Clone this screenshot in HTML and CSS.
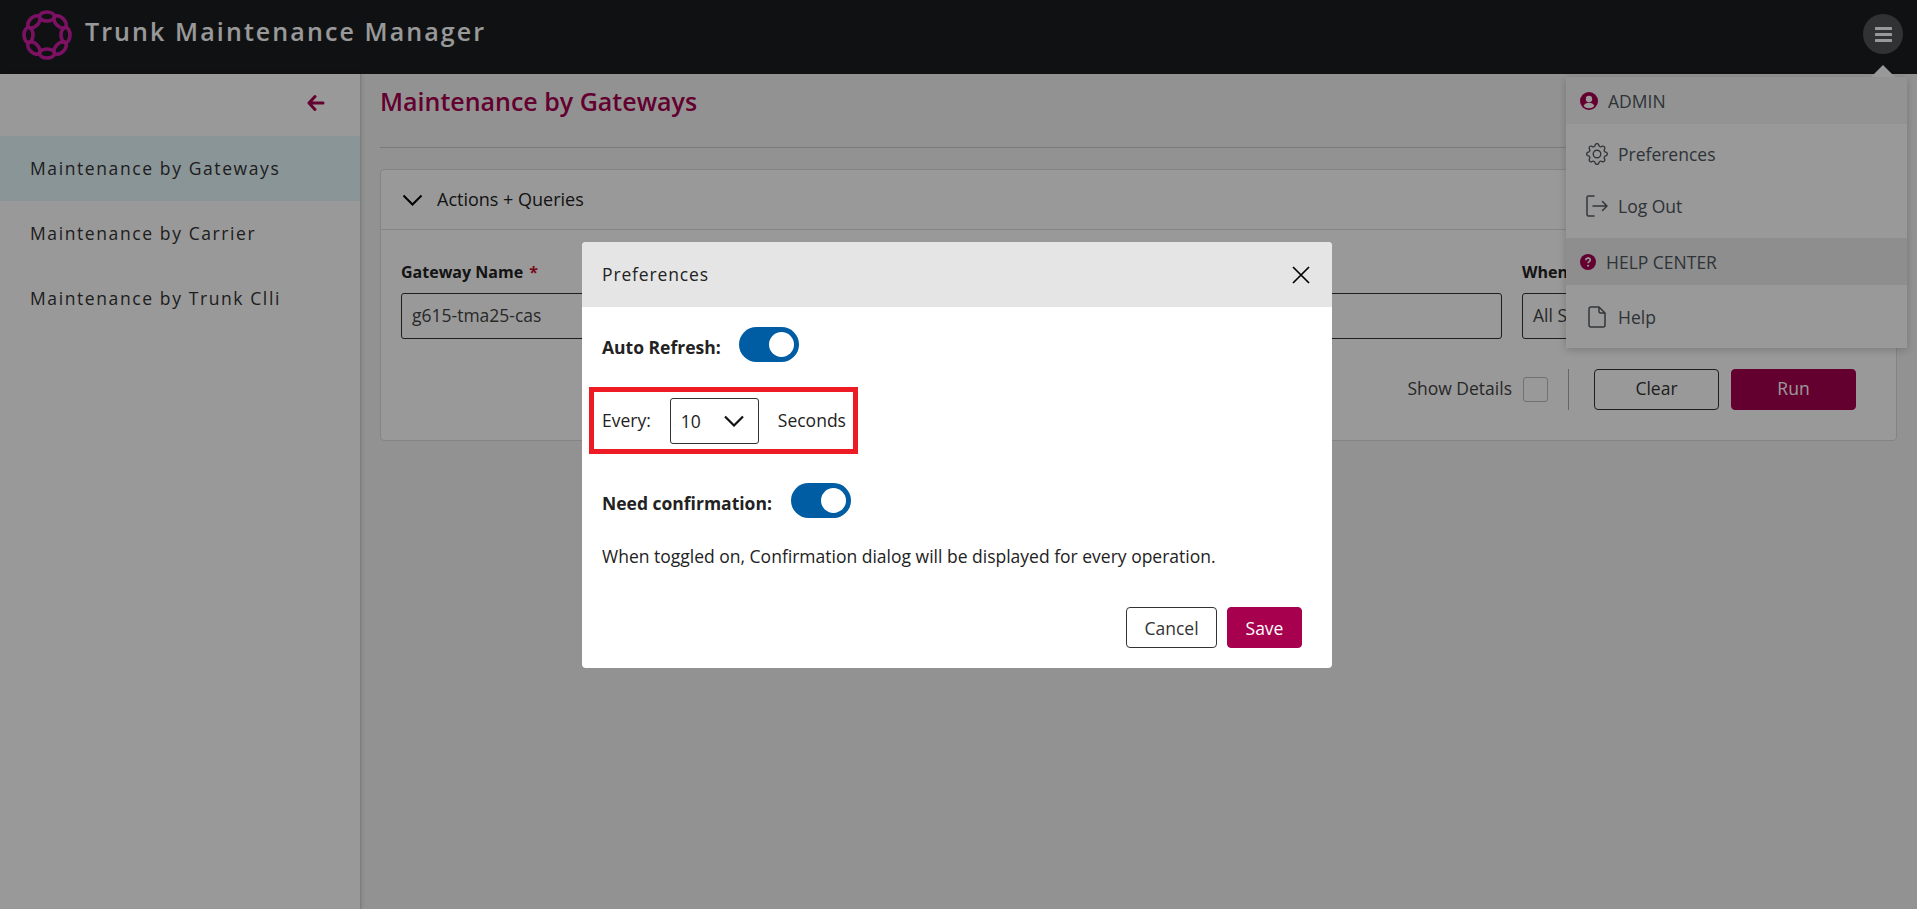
FILE: index.html
```html
<!DOCTYPE html>
<html lang="en">
<head>
    <meta charset="UTF-8">
    <meta name="viewport" content="width=device-width, initial-scale=1.0">
    <title>Trunk Maintenance Manager</title>
    <link rel="stylesheet" href="styles.css">
</head>
<body>
    <header class="top-bar">
        <svg class="logo" viewBox="0 0 50 50" width="50" height="50" fill="none">
            <defs>
                <linearGradient id="logoGrad" gradientUnits="userSpaceOnUse" x1="0" y1="15" x2="50" y2="25">
                    <stop offset="0" stop-color="#e01f9f"></stop>
                    <stop offset="0.6" stop-color="#c81ca8"></stop>
                    <stop offset="1" stop-color="#6a20b0"></stop>
                </linearGradient>
            </defs>
            <g stroke="url(#logoGrad)" stroke-width="3.6">
                <ellipse cx="25" cy="6.500" rx="7.500" ry="4.500"></ellipse>
                <ellipse cx="25" cy="6.500" rx="7.500" ry="4.500" transform="rotate(45 25 25)"></ellipse>
                <ellipse cx="25" cy="6.500" rx="7.500" ry="4.500" transform="rotate(90 25 25)"></ellipse>
                <ellipse cx="25" cy="6.500" rx="7.500" ry="4.500" transform="rotate(135 25 25)"></ellipse>
                <ellipse cx="25" cy="6.500" rx="7.500" ry="4.500" transform="rotate(180 25 25)"></ellipse>
                <ellipse cx="25" cy="6.500" rx="7.500" ry="4.500" transform="rotate(225 25 25)"></ellipse>
                <ellipse cx="25" cy="6.500" rx="7.500" ry="4.500" transform="rotate(270 25 25)"></ellipse>
                <ellipse cx="25" cy="6.500" rx="7.500" ry="4.500" transform="rotate(315 25 25)"></ellipse>
            </g>
        </svg>
        <div class="app-name">Trunk Maintenance Manager</div>
        <button class="menu-btn">
            <svg viewBox="0 0 17 15" width="17" height="15" fill="#fff">
                <rect y="0" width="17" height="3" rx="0.6"></rect>
                <rect y="6" width="17" height="3" rx="0.6"></rect>
                <rect y="12" width="17" height="3" rx="0.6"></rect>
            </svg>
        </button>
    </header>

    <div class="page">
        <nav class="sidebar">
            <div class="sidebar-top">
                <svg viewBox="0 0 18 18" width="18" height="18" fill="none" stroke="#a6004f" stroke-width="3" stroke-linecap="round" stroke-linejoin="round">
                    <path d="M8 2.500 2 9l6 6.500M2.500 9H16"></path>
                </svg>
            </div>
            <a class="side-item active">Maintenance by Gateways</a>
            <a class="side-item">Maintenance by Carrier</a>
            <a class="side-item">Maintenance by Trunk Clli</a>
        </nav>

        <main class="content">
            <div class="page-title"><h1>Maintenance by Gateways</h1></div>
            <section class="card">
                <div class="card-head">
                    <svg viewBox="0 0 20 12" width="21" height="12" fill="none" stroke="#000" stroke-width="2">
                        <path d="M1 1.500 10 10.500 19 1.500"></path>
                    </svg>
                    <span>Actions + Queries</span>
                </div>
                <div class="card-body">
                    <div class="fields">
                        <div class="field">
                            <label>Gateway Name <span class="req">*</span></label>
                            <div class="input">g615-tma25-cas</div>
                        </div>
                        <div class="field">
                            <label></label>
                            <div class="input"></div>
                        </div>
                        <div class="field">
                            <label>When</label>
                            <div class="input">All S</div>
                        </div>
                    </div>
                    <div class="actions">
                        <span class="show-details">Show Details</span>
                        <span class="checkbox"></span>
                        <span class="divider"></span>
                        <button class="btn btn-wide">Clear</button>
                        <button class="btn btn-wide btn-primary">Run</button>
                    </div>
                </div>
            </section>
        </main>
    </div>

    <div class="user-menu">
        <div class="menu-head">
            <svg viewBox="0 0 18 18" width="18" height="18">
                <circle cx="9" cy="9" r="9" fill="#a6004f"></circle>
                <circle cx="9" cy="7" r="3.200" fill="#fff"></circle>
                <path d="M3.600 14c1-2.400 3-3.200 5.400-3.200s4.400.8 5.400 3.200A7 7 0 0 1 9 16.200 7 7 0 0 1 3.600 14z" fill="#fff"></path>
            </svg>
            <span>ADMIN</span>
        </div>
        <div class="menu-group">
            <div class="menu-item">
                <svg viewBox="0 0 16 16" width="22" height="22" fill="#555c63">
                    <path d="M8 4.754a3.246 3.246 0 1 0 0 6.492 3.246 3.246 0 0 0 0-6.492zM5.754 8a2.246 2.246 0 1 1 4.492 0 2.246 2.246 0 0 1-4.492 0z"></path>
                    <path d="M9.796 1.343c-.527-1.790-3.065-1.790-3.592 0l-.094.319a.873.873 0 0 1-1.255.52l-.292-.16c-1.640-.892-3.433.902-2.540 2.541l.159.292a.873.873 0 0 1-.52 1.255l-.319.094c-1.790.527-1.790 3.065 0 3.592l.319.094a.873.873 0 0 1 .52 1.255l-.16.292c-.892 1.640.901 3.434 2.541 2.540l.292-.159a.873.873 0 0 1 1.255.52l.094.319c.527 1.790 3.065 1.790 3.592 0l.094-.319a.873.873 0 0 1 1.255-.52l.292.16c1.640.893 3.434-.902 2.540-2.541l-.159-.292a.873.873 0 0 1 .52-1.255l.319-.094c1.790-.527 1.790-3.065 0-3.592l-.319-.094a.873.873 0 0 1-.52-1.255l.16-.292c.893-1.640-.902-3.433-2.541-2.540l-.292.159a.873.873 0 0 1-1.255-.52l-.094-.319zm-2.633.283c.246-.835 1.428-.835 1.674 0l.094.319a1.873 1.873 0 0 0 2.693 1.115l.291-.16c.764-.415 1.600.42 1.184 1.185l-.159.292a1.873 1.873 0 0 0 1.116 2.692l.318.094c.835.246.835 1.428 0 1.674l-.319.094a1.873 1.873 0 0 0-1.115 2.693l.16.291c.415.764-.42 1.600-1.185 1.184l-.291-.159a1.873 1.873 0 0 0-2.693 1.116l-.094.318c-.246.835-1.428.835-1.674 0l-.094-.319a1.873 1.873 0 0 0-2.692-1.115l-.292.16c-.764.415-1.600-.42-1.184-1.185l.159-.291A1.873 1.873 0 0 0 1.945 8.930l-.319-.094c-.835-.246-.835-1.428 0-1.674l.319-.094A1.873 1.873 0 0 0 3.060 4.377l-.16-.292c-.415-.764.42-1.600 1.185-1.184l.292.159a1.873 1.873 0 0 0 2.692-1.115l.094-.319z"></path>
                </svg>
                <span>Preferences</span>
            </div>
            <div class="menu-item">
                <svg viewBox="0 0 22 22" width="22" height="22" fill="none" stroke="#555c63" stroke-width="1.500" stroke-linecap="round" stroke-linejoin="round">
                    <path d="M8 1H2.500A1.500 1.500 0 0 0 1 2.500v17A1.500 1.500 0 0 0 2.500 21H8M7 11h14M16.500 6.500 21 11l-4.500 4.500"></path>
                </svg>
                <span>Log Out</span>
            </div>
        </div>
        <div class="menu-head menu-head-help">
            <svg viewBox="0 0 16 16" width="16" height="16">
                <circle cx="8" cy="8" r="8" fill="#a6004f"></circle>
                <path d="M5.800 6.200C5.900 4.900 6.800 4.100 8.100 4.100c1.300 0 2.200.8 2.200 1.900 0 1.700-2.200 1.700-2.200 3.300" fill="none" stroke="#fff" stroke-width="1.600"></path>
                <circle cx="8.100" cy="11.800" r="1.050" fill="#fff"></circle>
            </svg>
            <span>HELP CENTER</span>
        </div>
        <div class="menu-item menu-item-help">
            <svg viewBox="0 0 18 22" width="18" height="22" fill="none" stroke="#555c63" stroke-width="1.500" stroke-linecap="round" stroke-linejoin="round">
                <path d="M11 1H3a2 2 0 0 0-2 2v16a2 2 0 0 0 2 2h12a2 2 0 0 0 2-2V7zM11 1v4.500A1.500 1.500 0 0 0 12.500 7H17"></path>
            </svg>
            <span>Help</span>
        </div>
    </div>

    <div class="overlay"></div>

    <div class="dialog">
        <div class="dialog-head">
            <span>Preferences</span>
            <svg viewBox="0 0 18 18" width="18" height="18" fill="none" stroke="#000" stroke-width="1.700">
                <path d="M1 1l16 16M17 1 1 17"></path>
            </svg>
        </div>
        <div class="dialog-body">
            <div class="toggle-row">
                <b>Auto Refresh:</b>
                <span class="toggle"></span>
            </div>
            <div class="every-row">
                <span>Every:</span>
                <div class="select">
                    <span>10</span>
                    <svg viewBox="0 0 20 12" width="20" height="12" fill="none" stroke="#111" stroke-width="2.200">
                        <path d="M1 1.500 10 10.500 19 1.500"></path>
                    </svg>
                </div>
                <span>Seconds</span>
            </div>
            <div class="toggle-row toggle-row-confirm">
                <b>Need confirmation:</b>
                <span class="toggle"></span>
            </div>
            <p class="hint">When toggled on, Confirmation dialog will be displayed for every operation.</p>
            <div class="dialog-foot">
                <button class="btn btn-cancel">Cancel</button>
                <button class="btn btn-save">Save</button>
            </div>
        </div>
    </div>
</body>
</html>
```

FILE: styles.css
```css
* { box-sizing: border-box; }
html, body { height: 100%; }
body { margin: 0; font-family: "Open Sans", sans-serif; font-size: 17.5px; color: #333; background-color: #f4f4f4; overflow: hidden; }

.top-bar { height: 74px; background-color: #1c1d21; display: flex; align-items: center; padding: 0 14px 5px 22px; }
.logo { flex-shrink: 0; }
.app-name { margin: 0 0 7px 13px; color: #fff; font-size: 25px; font-weight: 600; letter-spacing: 2.1px; }
.menu-btn { margin-left: auto; margin-bottom: 1px; width: 40px; height: 40px; border: 0; border-radius: 50%; background-color: #505458; display: flex; align-items: center; justify-content: center; padding: 0; }

.page { display: flex; height: calc(100% - 74px); }

.sidebar { width: 361px; flex-shrink: 0; background-color: #fff; border-right: 1px solid #d0d0d0; box-shadow: 1px 0 4px rgba(0,0,0,0.12); }
.sidebar-top { height: 62px; display: flex; align-items: center; justify-content: flex-end; padding: 0 35px 4px 0; }
.side-item { display: flex; align-items: center; height: 65px; padding: 0 0 2px 30px; font-size: 17.5px; letter-spacing: 1.6px; color: #333; }
.side-item.active { background-color: #e6f8fd; }

.content { flex: 1; min-width: 0; padding: 0 20px 0 19px; }
.page-title { height: 74px; border-bottom: 1px solid #ccc; }
.page-title h1 { margin: 0; padding-top: 10px; font-size: 25px; font-weight: 600; color: #a6004f; }

.card { margin-top: 21px; background-color: #fff; border: 1px solid #ddd; border-radius: 4px; }
.card-head { height: 60px; display: flex; align-items: center; gap: 14px; padding-left: 21px; border-bottom: 1px solid #ddd; color: #222; font-size: 18px; }
.card-head span { padding-bottom: 2px; }
.card-body { padding: 30px 20px 30px 20px; }
.fields { display: grid; grid-template-columns: 355px 1fr 354px; gap: 20px; }
.field label { display: block; height: 24px; line-height: 24px; margin-bottom: 9px; font-size: 16px; font-weight: 700; color: #222; }
.req { color: #c8102e; margin-left: 2px; }
.input { height: 46px; border: 1px solid #333; border-radius: 3px; padding: 0 10px 2px; display: flex; align-items: center; color: #444; }

.actions { display: flex; align-items: center; justify-content: flex-end; margin-top: 30px; padding-right: 20px; }
.show-details { color: #444; padding-bottom: 3px; }
.checkbox { width: 25px; height: 25px; margin-left: 11px; border: 1px solid #bbb; border-radius: 3px; }
.divider { width: 1px; height: 41px; margin: 0 25px 0 20px; background-color: #aaa; }

.btn { height: 41px; border-radius: 4px; border: 1px solid #333; background-color: #fff; color: #333; font-family: inherit; font-size: 17.5px; padding: 0; }
.btn-wide { width: 125px; padding-bottom: 3px; }
.btn-primary { margin-left: 12px; background-color: #a6004f; border-color: #a6004f; color: #fff; }

.user-menu { position: absolute; top: 77px; left: 1566px; width: 341px; height: 271px; background-color: #fff; box-shadow: 0 2px 8px rgba(0,0,0,0.2); color: #4d555d; }
.user-menu::before { content: ""; position: absolute; top: -12px; right: 12px; border-left: 12px solid transparent; border-right: 12px solid transparent; border-bottom: 12px solid #fff; }
.menu-head { height: 47px; display: flex; align-items: center; gap: 10px; padding-left: 14px; background-color: #f5f5f5; font-weight: 500; }
.menu-head-help { background-color: #ededed; }
.menu-group { height: 114px; padding-top: 4px; }
.menu-item { height: 52px; display: flex; align-items: center; gap: 10px; padding-left: 20px; }
.menu-item-help { height: 63px; gap: 12px; padding-left: 22px; }

.overlay { position: fixed; inset: 0; background-color: rgba(0,0,0,0.4); }

.dialog { position: absolute; top: 242px; left: 582px; width: 750px; height: 426px; background-color: #fff; border-radius: 4px; color: #222; }
.dialog-head { height: 65px; display: flex; align-items: center; justify-content: space-between; padding: 0 22px 0 20px; background-color: #e5e5e5; border-radius: 4px 4px 0 0; letter-spacing: 0.85px; }
.dialog-head span { padding-bottom: 2px; }
.dialog-body { padding: 20px 30px 20px 20px; }
.toggle-row { display: flex; align-items: center; gap: 18px; height: 35px; }
.toggle-row b { padding-top: 5px; }
.toggle-row-confirm { margin-top: 29px; gap: 19px; }
.toggle { position: relative; width: 60px; height: 35px; border-radius: 18px; background-color: #005da3; flex-shrink: 0; }
.toggle::after { content: ""; position: absolute; top: 5px; right: 5px; width: 25px; height: 25px; border-radius: 50%; background-color: #fff; }
.every-row { display: flex; align-items: center; width: 269px; height: 67px; margin: 25px 0 0 -13px; padding: 0 0 2px 8px; border: 5px solid #ed1c24; }
.select { display: flex; align-items: center; justify-content: space-between; width: 89px; height: 46px; margin: 2px 19px 0; padding: 0 14px 0 10px; border: 1px solid #333; border-radius: 3px; }
.hint { margin: 26px 0 0; line-height: 24px; }
.dialog-foot { display: flex; justify-content: flex-end; gap: 10px; margin-top: 39px; }
.btn-cancel { width: 91px; }
.btn-save { width: 75px; background-color: #a6004f; border-color: #a6004f; color: #fff; }
```
